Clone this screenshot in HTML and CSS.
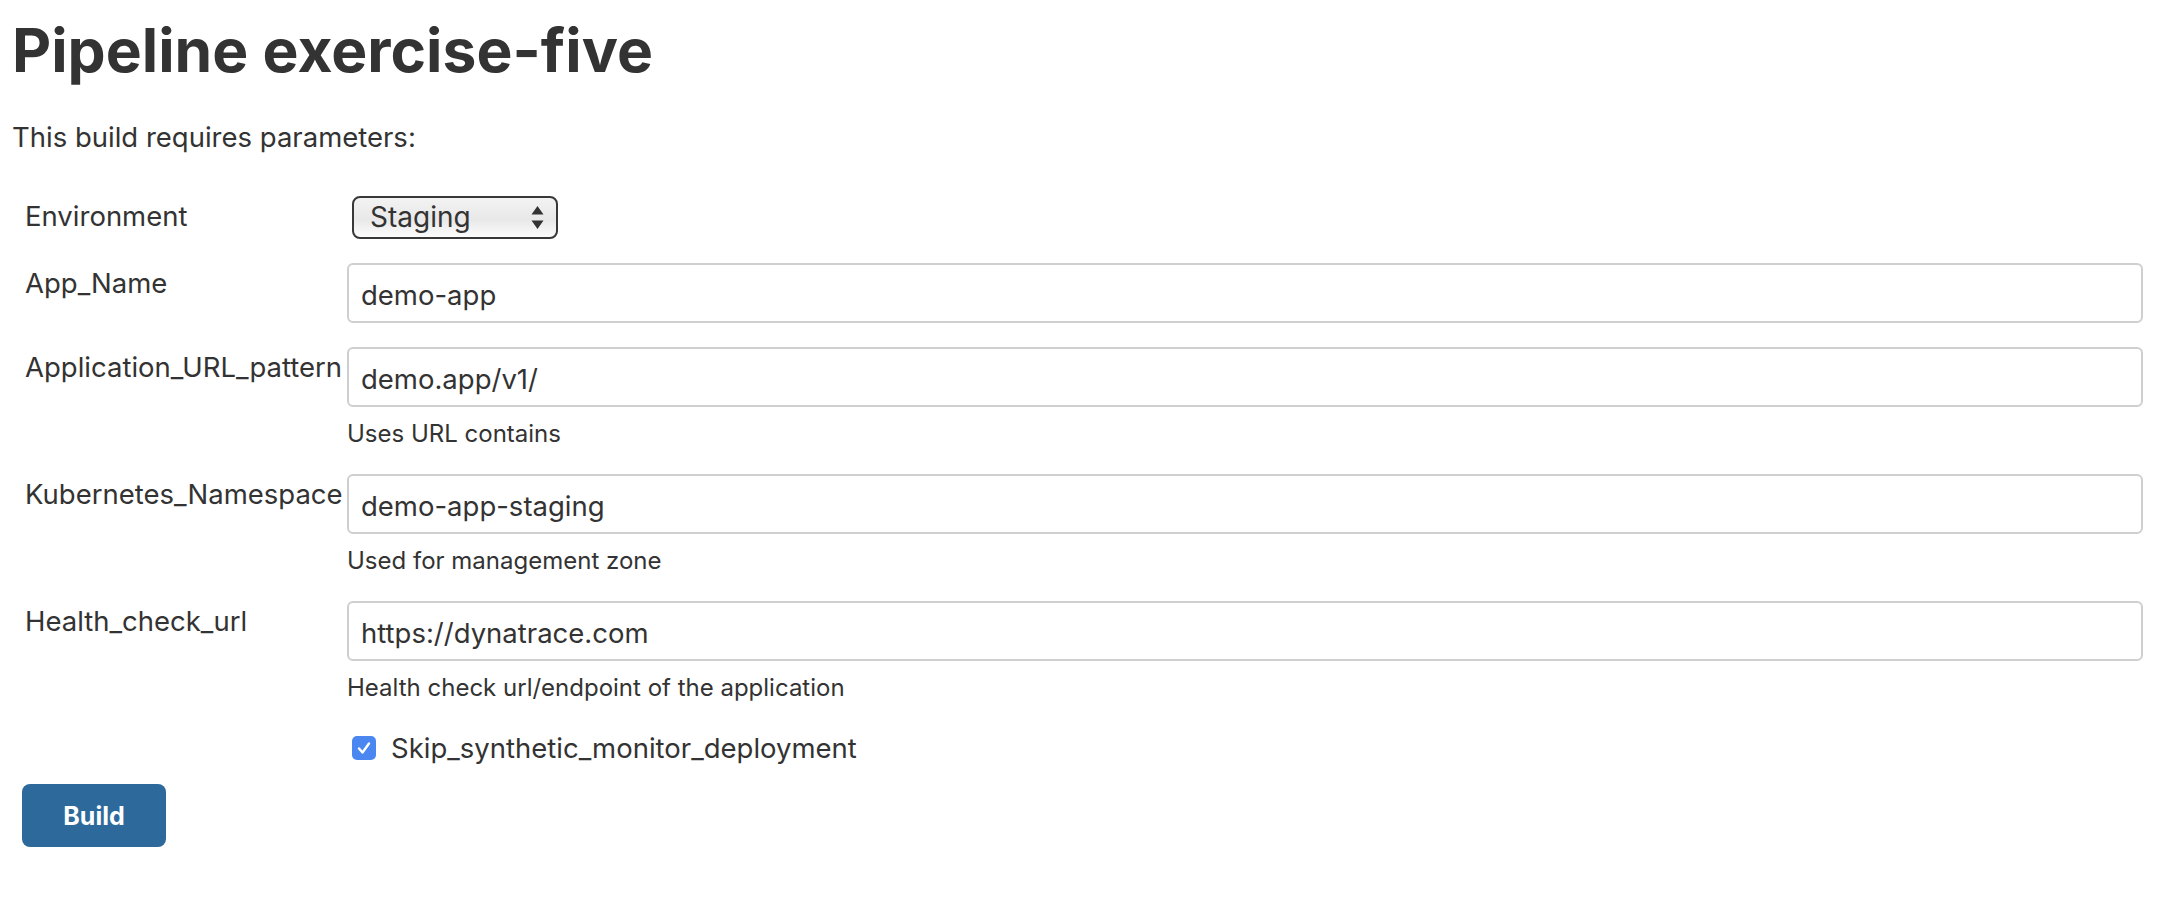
FILE: index.html
```html
<!DOCTYPE html>
<html lang="en">
<head>
<meta charset="utf-8">
<title>Pipeline exercise-five</title>
<link rel="stylesheet" href="styles.css">
</head>
<body>
<main class="page">
  <h1 class="title">Pipeline exercise-five</h1>
  <p class="intro">This build requires parameters:</p>
  <form class="params">
    <div class="row">
      <div class="label">Environment</div>
      <div class="field">
        <div class="select-wrap">
          <select class="select"><option>Staging</option></select>
          <svg class="select-arrows" width="13" height="23" viewBox="0 0 13 23"><path d="M6.5 0 L12.5 8.5 L0.5 8.5 Z M0.5 14.5 L12.5 14.5 L6.5 23 Z" fill="#333"/></svg>
        </div>
      </div>
    </div>
    <div class="row">
      <div class="label">App_Name</div>
      <div class="field"><input class="text-input" type="text" value="demo-app"></div>
    </div>
    <div class="row">
      <div class="label">Application_URL_pattern</div>
      <div class="field">
        <input class="text-input" type="text" value="demo.app/v1/">
        <div class="help">Uses URL contains</div>
      </div>
    </div>
    <div class="row">
      <div class="label">Kubernetes_Namespace</div>
      <div class="field">
        <input class="text-input" type="text" value="demo-app-staging">
        <div class="help">Used for management zone</div>
      </div>
    </div>
    <div class="row">
      <div class="label">Health_check_url</div>
      <div class="field">
        <input class="text-input" type="text" value="https://dynatrace.com">
        <div class="help">Health check url/endpoint of the application</div>
      </div>
    </div>
    <div class="row">
      <div class="label"></div>
      <div class="field">
        <label class="check">
          <span class="check-box"><svg width="24" height="24" viewBox="0 0 24 24"><path d="M7 12.5 L10.5 16.5 L17 7.5" fill="none" stroke="#fff" stroke-width="2.4" stroke-linecap="round" stroke-linejoin="round"/></svg></span>
          <span class="check-label">Skip_synthetic_monitor_deployment</span>
        </label>
      </div>
    </div>
  </form>
  <button class="build" type="button">Build</button>
</main>
</body>
</html>
```
FILE: styles.css
```css
html, body {
  margin: 0;
  padding: 0;
  background: #fff;
}

body {
  font-family: Inter, "Noto Sans", "Liberation Sans", sans-serif;
  color: #333;
}

.page {
  padding: 0 25px 0 12px;
}

.title {
  margin: 14px 0 0;
  font-size: 60.5px;
  line-height: 72px;
  font-weight: 700;
  color: #333;
}

.intro {
  margin: 31px 0 0;
  font-size: 27.5px;
  line-height: 40px;
}

.params {
  margin-top: 39px;
  display: flex;
  flex-direction: column;
  gap: 24px;
}

.row {
  display: grid;
  grid-template-columns: 335px 1fr;
  align-items: start;
}

.label {
  padding-left: 13px;
  font-size: 27.5px;
  line-height: 40px;
  white-space: nowrap;
}

.field {
  min-width: 0;
}

.select-wrap {
  position: relative;
  display: inline-block;
  margin-left: 5px;
  vertical-align: top;
}

.select {
  -webkit-appearance: none;
  appearance: none;
  display: block;
  width: 206px;
  height: 43px;
  box-sizing: border-box;
  padding: 0 40px 0 16px;
  border: 2px solid #383838;
  border-radius: 8px;
  background: linear-gradient(to bottom, #f3f3f3 0%, #e8e8e8 55%, #fcfcfc 100%);
  font-family: Inter, "Noto Sans", sans-serif;
  font-size: 28px;
  color: #333;
  line-height: 39px;
}

.select-arrows {
  position: absolute;
  right: 14px;
  top: 10px;
  pointer-events: none;
}

.text-input {
  display: block;
  width: 100%;
  height: 60px;
  box-sizing: border-box;
  margin: 0;
  padding: 13px 12px 9px;
  border: 2px solid #cfcfcf;
  border-radius: 6px;
  font-family: Inter, "Noto Sans", sans-serif;
  font-size: 27.5px;
  line-height: 34px;
  color: #333;
  background: #fff;
  outline: none;
}

.help {
  padding-top: 10px;
  font-size: 24px;
  line-height: 33px;
  color: #333;
}

.check {
  display: flex;
  align-items: center;
  gap: 15px;
  margin-left: 5px;
  height: 40px;
}

.check-box {
  display: block;
  width: 24px;
  height: 24px;
  border-radius: 5px;
  background: #4a87f0;
}

.check-box svg {
  display: block;
}

.check-label {
  font-size: 27.5px;
  line-height: 40px;
}

.build {
  display: block;
  margin: 16px 0 0 10px;
  width: 144px;
  height: 63px;
  border: none;
  border-radius: 8px;
  background: #2e699b;
  color: #fff;
  font-family: Inter, "Noto Sans", sans-serif;
  font-size: 25px;
  font-weight: 700;
  padding: 0;
}
```
